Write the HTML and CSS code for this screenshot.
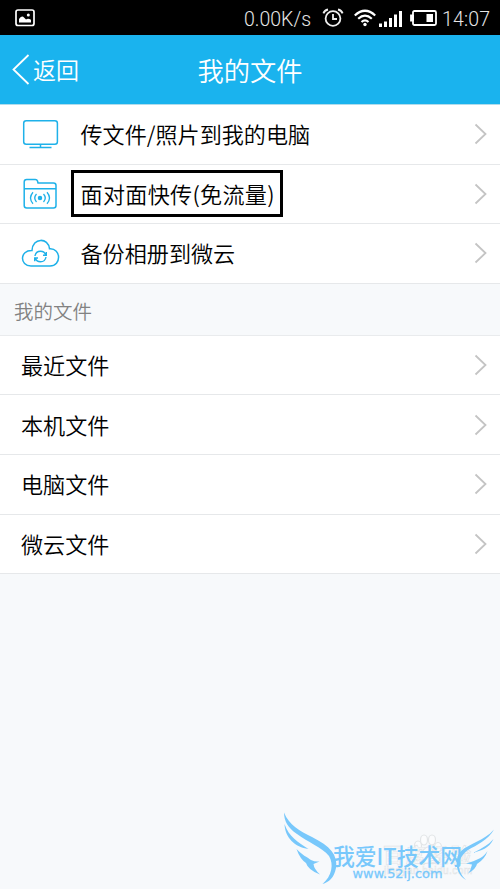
FILE: index.html
```html
<!DOCTYPE html>
<html lang="zh-CN">
<head>
<meta charset="utf-8">
<title>我的文件</title>
<link rel="stylesheet" href="styles.css">
</head>
<body>
<div class="status">
  <svg class="picture" width="20" height="18" viewBox="0 0 20 18"><rect x="1" y="1" width="18" height="15.5" rx="2" fill="none" stroke="#fff" stroke-width="1.7"/><path d="M4 13.5V10q3-4 5-1.5l2 2q2-1.8 5 .2v2.8z" fill="#fff"/><circle cx="13.3" cy="6" r="1.5" fill="#fff"/></svg>
  <span class="speed">0.00K/s</span>
  <svg class="alarm" width="22" height="20" viewBox="0 0 22 20" fill="none" stroke="#eee" stroke-width="1.8"><circle cx="11" cy="10.5" r="7.4"/><path d="M11 6v5h4M1.4 5.4Q2.5 2.2 6 1.5M20.6 5.4Q19.5 2.2 16 1.5"/></svg>
  <svg class="wifi" width="22" height="18" viewBox="0 0 22 18" fill="none" stroke="#fff" stroke-width="2.2"><path d="M.8 6.5Q11-3 21.2 6.5M4.2 9.8Q11 3.5 17.8 9.8M7.5 13Q11 9.8 14.5 13"/><circle cx="11" cy="15.5" r="1.7" fill="#fff" stroke="none"/></svg>
  <svg class="signal" width="24" height="17" viewBox="0 0 24 17" fill="#fff"><path d="M0 13.5h3V17H0zM5 11.5h3V17H5zM10 8h3v9h-3zM15 4.500h3V17h-3zM20 1h3v16h-3z"/></svg>
  <svg class="battery" width="27" height="16" viewBox="0 0 27 16"><path d="M1 5.500h2V2.500q0-1.500 1.500-1.500h20Q26 1 26 2.500v11q0 1.500-1.500 1.500h-20Q3 15 3 13.500v-3H1z" fill="none" stroke="#fff" stroke-width="1.8"/><path d="M1 5h3v6H1zM16.500 4H23v8h-6.500z" fill="#fff"/></svg>
  <span class="time">14:07</span>
</div>
<header class="header">
  <a class="back"><svg width="18" height="31" viewBox="0 0 18 31"><path d="M16.500 1 1.500 15.500l15 14.500" fill="none" stroke="#fff" stroke-width="1.8"/></svg><span>返回</span></a>
  <h1 class="title">我的文件</h1>
</header>
<main>
  <ul class="list tools">
    <li class="row"><svg class="icon" width="40" height="34" viewBox="0 0 40 34"><rect x="3.700" y="3.700" width="33.700" height="23.500" rx="2.500"/><path d="M20.500 27.500v3M9.500 30.500h22"/></svg><span class="label">传文件/照片到我的电脑</span><svg class="chevron" width="13" height="22" viewBox="0 0 13 22"><path d="M1.500 1.500 11.500 11 1.500 20.500"/></svg></li>
    <li class="row"><svg class="icon" width="40" height="34" viewBox="0 0 40 34"><path d="M4.200 13V5q0-2.500 2.500-2.500h8.600q1.700 0 2.200 1.500l.5 2h15.500q2.500 0 2.500 2.500v20q0 2.500-2.500 2.500H6.700q-2.500 0-2.500-2.500zM4.200 11.700H36"/><g stroke-width="1.300"><circle cx="20" cy="21" r="1.600" fill="#1eb1e9"/><path d="M16.500 17q-3.500 4 0 8M23.500 17q3.500 4 0 8M13 15.300q-5 5.700 0 11.400M27 15.300q5 5.700 0 11.400"/></g></svg><span class="label boxed">面对面快传(免流量)</span><svg class="chevron" width="13" height="22" viewBox="0 0 13 22"><path d="M1.500 1.500 11.500 11 1.500 20.500"/></svg></li>
    <li class="row"><svg class="icon" width="40" height="34" viewBox="0 0 40 34"><path d="M11 30C-.5 30-.5 14 12 14.500 12.500 1.300 28.500 1.300 29.500 12.800 41.500 12 41.500 30 30 30z"/><path d="M15 20q.8-4.800 5.500-4.800 4 0 5.200 3.800M26 21q-.8 4.800-5.500 4.800-4 0-5.200-3.800M26.300 16v3.200h-3.300M14.700 25.200V22H18" stroke-width="1.400"/></svg><span class="label">备份相册到微云</span><svg class="chevron" width="13" height="22" viewBox="0 0 13 22"><path d="M1.500 1.500 11.500 11 1.500 20.500"/></svg></li>
  </ul>
  <h2 class="section">我的文件</h2>
  <ul class="list files">
    <li class="row"><span class="label">最近文件</span><svg class="chevron" width="13" height="22" viewBox="0 0 13 22"><path d="M1.500 1.500 11.500 11 1.500 20.500"/></svg></li>
    <li class="row"><span class="label">本机文件</span><svg class="chevron" width="13" height="22" viewBox="0 0 13 22"><path d="M1.500 1.500 11.500 11 1.500 20.500"/></svg></li>
    <li class="row"><span class="label">电脑文件</span><svg class="chevron" width="13" height="22" viewBox="0 0 13 22"><path d="M1.500 1.500 11.500 11 1.500 20.500"/></svg></li>
    <li class="row"><span class="label">微云文件</span><svg class="chevron" width="13" height="22" viewBox="0 0 13 22"><path d="M1.500 1.500 11.500 11 1.500 20.500"/></svg></li>
  </ul>
</main>
<svg class="watermark" width="230" height="89" viewBox="270 800 230 89">
  <g fill="#fbfcfd" stroke="#e2e5e7" stroke-width="1.200">
    <ellipse cx="418" cy="846" rx="3.500" ry="5"/><ellipse cx="424" cy="840" rx="3.500" ry="5"/><ellipse cx="432" cy="840" rx="3.500" ry="5"/><ellipse cx="438" cy="847" rx="3.500" ry="4.500"/><path d="M428 847c-4 0-5 5-9 8-6 6 0 10 9 8 9 2 15-2 9-8-4-3-5-8-9-8z"/>
    <text class="wm-brand" x="383" y="863" textLength="88">百度经验</text>
    <text class="wm-domain" x="384" y="874" textLength="88">jingyan.baidu.com</text>
  </g>
  <g fill="#78c8fb">
    <path d="M284 812.500C289 825 300 831 312 837 330 846 338 855 336 868 334 878 329 882 322.500 884 332 876 334 864 329 856 322 847 307 842 297 834 288 828 284 821 284 812.500z"/>
    <path d="M284.500 824C289 837 298 842 308.500 849 295 847 285 838 284.500 824z"/>
    <path d="M296.500 849C302 855 307 857 311 860Q315 862 319.500 861.500L313.500 864Q314 869 320 874.500 308 870 306 863 300 859 296.500 849z"/>
    <path d="M494 829.500C488 840 477 845 468 850 457 858 456 870 466 880 454 873 455 857 461 851 470 843 484 841 494 829.500z"/>
    <path d="M493.500 839C489 849 481 850 473 853 484 847 488 845 493.500 839z"/>
    <path d="M487.500 851C484 857 478 860 466 863.500L472 864.500Q471 870 468 873.500 476 869 477 864 485 859 487.500 851z"/>
    <text class="wm-title" x="333" y="864.500" textLength="129" lengthAdjust="spacingAndGlyphs">我爱IT技术网</text>
    <text class="wm-url" x="352.500" y="878" textLength="90" lengthAdjust="spacingAndGlyphs">www.52ij.com</text>
  </g>
</svg>
</body>
</html>
```
FILE: styles.css
```css
* { box-sizing: border-box; }
body {
  position: relative;
  margin: 0;
  height: 889px;
  overflow: hidden;
  background: #f7f9fb;
  color: #000;
  font-family: "Noto Sans CJK SC", sans-serif;
  font-weight: 350;
}
.status {
  display: flex;
  align-items: center;
  height: 35px;
  padding: 1px 8px 0 15px;
  background: #000;
  color: #e6e6e6;
  font: 19.500px/31px Roboto, sans-serif;
  font-weight: 300;
}
.status svg { flex: none; }
.speed, .time { padding-top: 2px; white-space: nowrap; }
.speed { width: 68px; margin-left: auto; }
.alarm { margin-left: 10px; }
.wifi { margin-left: 10px; }
.signal { margin-left: 3px; }
.battery { margin-left: 7px; }
.time { width: 50px; margin-left: 5px; letter-spacing: .2px; }
.header {
  display: grid;
  grid-template-columns: 1fr auto 1fr;
  align-items: center;
  height: 70px;
  border-bottom: 1px solid #b0dcec;
  background: #1ab3ee;
  color: #fff;
}
.back { display: flex; align-items: center; gap: 3px; padding-left: 12px; font-size: 23px; line-height: 32px; }
.back span { padding-bottom: 1px; }
.title { margin: 0; font-size: 26.300px; line-height: 38px; font-weight: 350; }
.list { margin: 0; padding: 0; list-style: none; background: #fff; }
.row {
  display: flex;
  align-items: center;
  height: 59.600px;
  padding: 0 13px 0 20px;
  border-bottom: 1px solid #e6e8ea;
}
.icon { flex: none; margin-right: 11px; fill: none; stroke: #1eb1e9; stroke-width: 1.500; }
.label { padding: 0 1px 2px; font-size: 22.100px; line-height: 32px; white-space: nowrap; }
.tools .label { padding-left: 9.500px; }
.tools .boxed { width: 212px; height: 47px; padding: 4px 0 0 6.500px; border: 3px solid #000; letter-spacing: .3px; line-height: 33px; }
.chevron { flex: none; margin-left: auto; fill: none; stroke: #c4c4c4; stroke-width: 1.800; }
.section {
  height: 52px;
  margin: 0;
  padding-left: 14px;
  border-bottom: 1px solid #e9ebed;
  color: #828282;
  font-size: 19.500px;
  font-weight: 350;
  line-height: 53px;
}
.watermark { position: absolute; left: 270px; top: 800px; }
.wm-brand { font-size: 20px; font-weight: 500; stroke-width: .7px; }
.wm-domain { font: 10px "Liberation Sans", sans-serif; stroke-width: .5px; }
.wm-title { font-size: 22.500px; font-weight: 500; }
.wm-url { font: 13px "DejaVu Sans", sans-serif; stroke: #78c8fb; stroke-width: .3px; }
```
